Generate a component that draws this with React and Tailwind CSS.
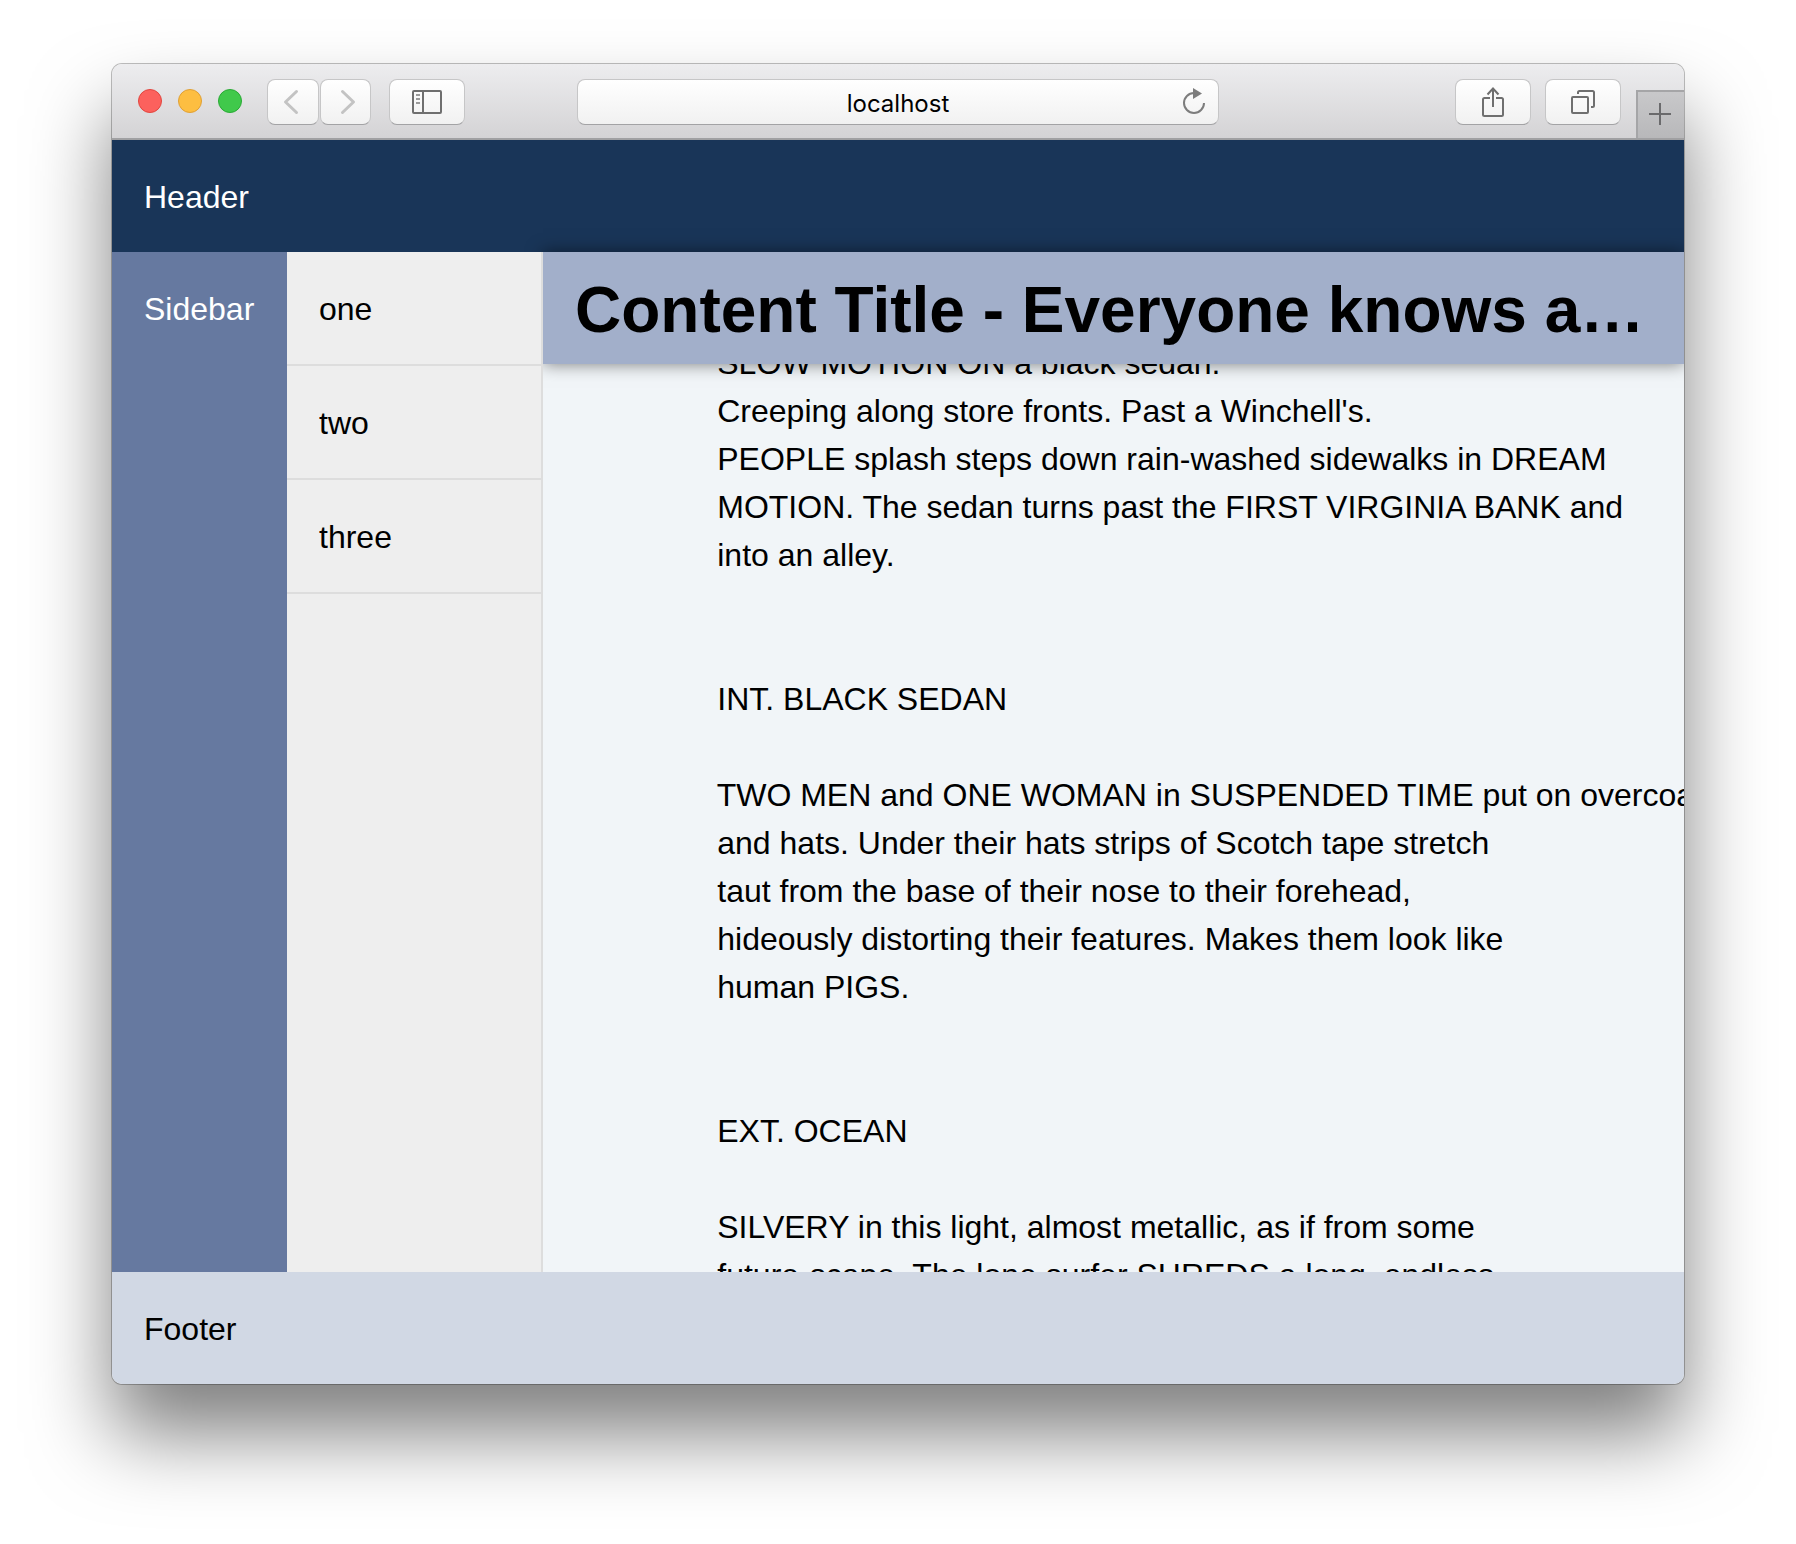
const SCRIPT_LINES = [
  'SLOW MOTION ON a black sedan.',
  "Creeping along store fronts. Past a Winchell's.",
  'PEOPLE splash steps down rain-washed sidewalks in DREAM',
  'MOTION. The sedan turns past the FIRST VIRGINIA BANK and',
  'into an alley.',
  '',
  '',
  'INT. BLACK SEDAN',
  '',
  'TWO MEN and ONE WOMAN in SUSPENDED TIME put on overcoats',
  'and hats. Under their hats strips of Scotch tape stretch',
  'taut from the base of their nose to their forehead,',
  'hideously distorting their features. Makes them look like',
  'human PIGS.',
  '',
  '',
  'EXT. OCEAN',
  '',
  'SILVERY in this light, almost metallic, as if from some',
  'future-scape. The lone surfer SHREDS a long, endless',
];

const INDENT = ' '.repeat(16);

const ITEMS = ['one', 'two', 'three'];

const CONTROL =
  'flex h-[46px] shrink-0 items-center justify-center rounded-lg border border-[#c6c6c7] border-b-[#a3a3a5] bg-linear-to-b from-white to-[#f1f1f1]';

function ToolbarButton({ label, className, children }) {
  return (
    <button type="button" aria-label={label} className={`${CONTROL} ${className}`}>
      {children}
    </button>
  );
}

function TrafficLight({ label, className }) {
  return (
    <button
      type="button"
      aria-label={label}
      className={`size-6 shrink-0 rounded-full border ${className}`}
    />
  );
}

function Toolbar() {
  return (
    <div className="flex h-[76px] shrink-0 items-center justify-between border-b-2 border-[#a0a0a2] bg-linear-to-b from-[#ededef] to-[#d4d3d5] pt-0.5">
      <div className="flex flex-1 items-center">
        <div className="flex gap-4 pb-0.5 pl-[26px]">
          <TrafficLight label="Close" className="border-[#e2463f] bg-[#fc615d]" />
          <TrafficLight label="Minimize" className="border-[#e0a035] bg-[#fdbe41]" />
          <TrafficLight label="Zoom" className="border-[#2aaa35] bg-[#40c94b]" />
        </div>
        <div className="ml-[25px] flex gap-px">
          <ToolbarButton label="Back" className="w-[52px] pr-1">
            <svg width="16" height="26" viewBox="0 0 16 26" fill="none" stroke="#c3c3c3" strokeWidth="3" strokeLinecap="round" strokeLinejoin="round">
              <path d="M13.500 2.500 2.500 13 13.500 23.500" />
            </svg>
          </ToolbarButton>
          <ToolbarButton label="Forward" className="w-[51px] pl-1">
            <svg width="16" height="26" viewBox="0 0 16 26" fill="none" stroke="#c3c3c3" strokeWidth="3" strokeLinecap="round" strokeLinejoin="round">
              <path d="M2.500 2.500 13.500 13 2.500 23.500" />
            </svg>
          </ToolbarButton>
        </div>
        <ToolbarButton label="Show sidebar" className="ml-[18px] w-[76px]">
          <svg width="30" height="24" viewBox="0 0 30 24" fill="none" stroke="#6f6f6f" strokeWidth="2">
            <rect x="1" y="1" width="28" height="22" rx="1" />
            <path d="M11 1v22" />
            <path d="M4 5h4M4 9h4M4 13h4" stroke="#9b9b9b" />
          </svg>
        </ToolbarButton>
      </div>

      <div className={`${CONTROL} w-[642px] pr-3 pl-9`}>
        <input
          type="text"
          aria-label="Address"
          defaultValue="localhost"
          className="min-w-0 flex-1 bg-transparent pt-1 text-center font-['Inter','Liberation_Sans',sans-serif] text-2xl text-black outline-none"
        />
        <button type="button" aria-label="Reload" className="shrink-0">
          <svg width="24" height="28" viewBox="0 0 24 28" fill="none">
            <path d="M12 5A10 10 0 1 0 22 15" stroke="#7d7d7d" strokeWidth="2" />
            <path d="M11 0v11L20 5.500z" fill="#7d7d7d" />
          </svg>
        </button>
      </div>

      <div className="flex flex-1 items-center justify-end self-stretch">
        <ToolbarButton label="Share" className="w-[76px]">
          <svg width="24" height="32" viewBox="0 0 24 32" fill="none" stroke="#6f6f6f" strokeWidth="2">
            <path d="M9 12H3.500Q2 12 2 13.500V28.500Q2 30 3.500 30H20.500Q22 30 22 28.500V13.500Q22 12 20.500 12H15" />
            <path d="M12 21V3M6.500 8.500 12 2.500 17.500 8.500" />
          </svg>
        </ToolbarButton>
        <ToolbarButton label="Show all tabs" className="ml-[14px] w-[76px]">
          <svg width="26" height="26" viewBox="0 0 26 26" fill="none" stroke="#6f6f6f" strokeWidth="2">
            <rect x="2" y="8" width="16" height="16" rx="1" />
            <path d="M8 5V3.500Q8 2 9.500 2H22.500Q24 2 24 3.500V16.500Q24 18 22.500 18H21" />
          </svg>
        </ToolbarButton>
        <button
          type="button"
          aria-label="New tab"
          className="ml-[15px] flex size-12 shrink-0 items-center justify-center self-end border-t-2 border-l-2 border-[#a5a5a7] bg-linear-to-b from-[#c8c8ca] to-[#b8b8ba] pr-0.5 pb-0.5"
        >
          <svg width="22" height="22" viewBox="0 0 22 22" stroke="#6a6a6c" strokeWidth="2">
            <path d="M11 0v22M0 11h22" />
          </svg>
        </button>
      </div>
    </div>
  );
}

export default function App() {
  return (
    <div className="flex h-screen bg-white px-28 pt-16 pb-40 font-['Liberation_Sans',Arial,sans-serif] text-[32px] leading-[48px] text-black">
      <div className="flex min-w-0 flex-1 flex-col overflow-hidden rounded-[10px] shadow-[0_0_0_1px_rgba(0,0,0,0.25),0_50px_80px_rgba(0,0,0,0.5)]">
        <Toolbar />

        <header className="shrink-0 bg-[#193558] px-8 pt-[33px] pb-[31px] text-white">Header</header>

        <div className="flex min-h-0 flex-1">
          <aside className="w-[175px] shrink-0 bg-[#6679a0] px-8 pt-[33px] pb-[31px] text-white">
            Sidebar
          </aside>

          <nav className="relative z-20 w-64 shrink-0 border-r-2 border-[#dddddd] bg-[#eeeeee]">
            <ul>
              {ITEMS.map((item) => (
                <li key={item} className="border-b-2 border-[#dddddd]">
                  <a href={`#${item}`} className="block px-8 pt-[33px] pb-[31px]">
                    {item}
                  </a>
                </li>
              ))}
            </ul>
          </nav>

          <main className="flex min-w-0 flex-1 flex-col bg-[#f1f5f8]">
            <h1 className="relative z-10 shrink-0 truncate bg-[#a2afca] px-8 pt-[26px] pb-[22px] text-[64px] leading-[64px] font-bold shadow-[0_0_16px_rgba(0,0,0,0.5)]">
              Content Title - Everyone knows about the bird
            </h1>
            <div className="min-h-0 flex-1 overflow-hidden px-8">
              <pre className="-mt-[25px] font-['Liberation_Sans',Arial,sans-serif]">
                {SCRIPT_LINES.map((line) => (line ? INDENT + line : '')).join('\n')}
              </pre>
            </div>
          </main>
        </div>

        <footer className="shrink-0 bg-[#d1d8e4] px-8 pt-[33px] pb-[31px]">Footer</footer>
      </div>
    </div>
  );
}
